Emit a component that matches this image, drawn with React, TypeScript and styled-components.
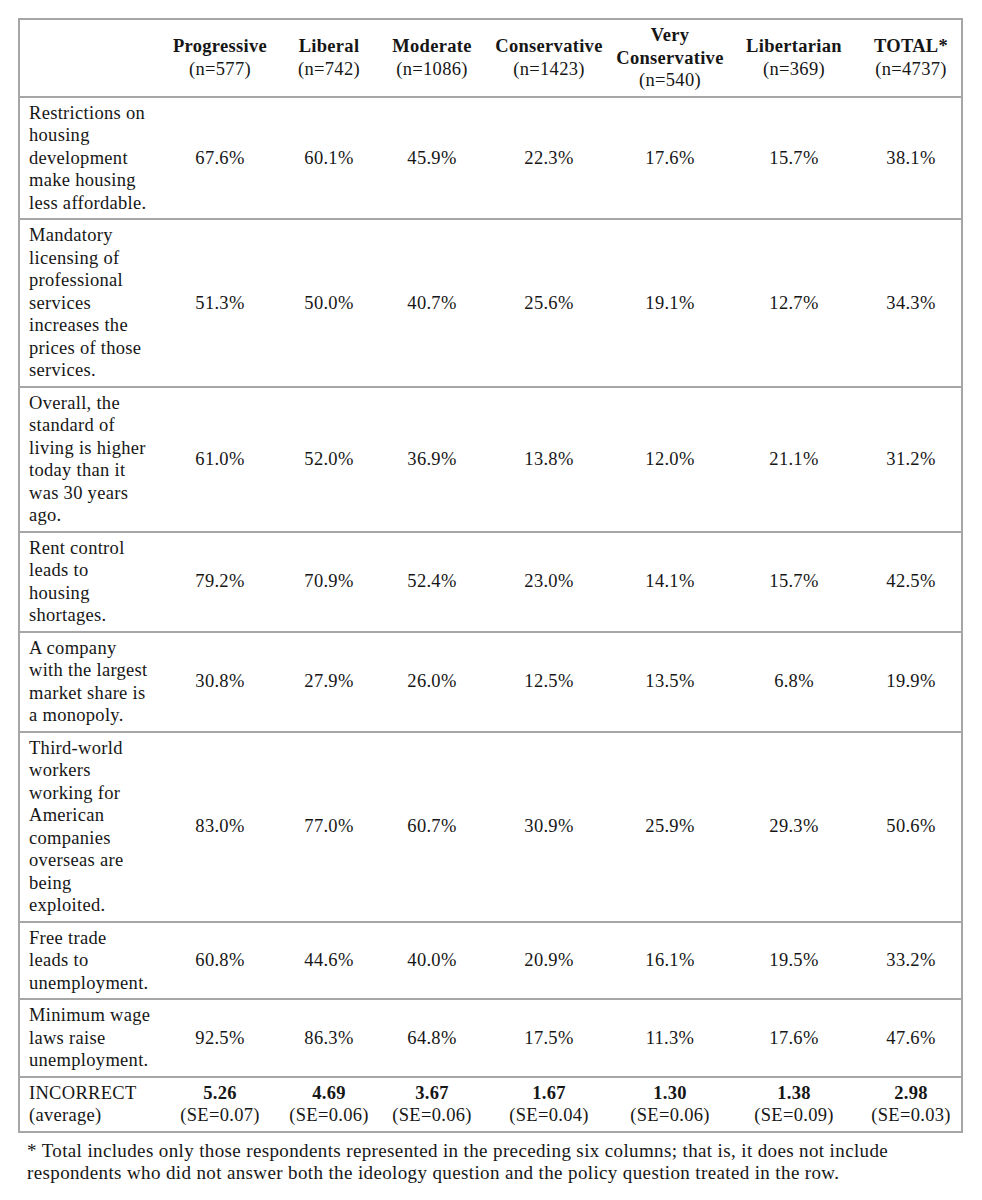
import styled, { createGlobalStyle } from "styled-components";

const GlobalStyle = createGlobalStyle`
  body {
    margin: 0;
    background: #ffffff;
    color: #161616;
    font-family: "Liberation Serif", "Times New Roman", serif;
  }
`;

const Page = styled.div`
  padding: 18px 0 0 18px;
  width: 943px;
`;

const Table = styled.table`
  width: 943px;
  table-layout: fixed;
  border-collapse: collapse;
  border: 2px solid #a6a6a6;
  font-size: 18.5px;
  line-height: 22.5px;
  letter-spacing: 0.3px;
`;

const Row = styled.tr`
  border-bottom: 2px solid #a6a6a6;
`;

const HeadCell = styled.th`
  padding: 4px 3px;
  text-align: center;
  vertical-align: middle;
  font-weight: 400;
`;

const ColName = styled.div`
  font-weight: 700;
`;

const LabelCell = styled.td`
  padding: 4px 4px 4px 9px;
  text-align: left;
  vertical-align: middle;
`;

const ValueCell = styled.td`
  padding: 4px 3px;
  text-align: center;
  vertical-align: middle;
`;

const Mean = styled.div`
  font-weight: 700;
`;

const Note = styled.p`
  margin: 7px 0 0 9px;
  font-size: 19px;
  line-height: 22.6px;
  letter-spacing: 0.37px;
  white-space: nowrap;
`;

interface Column {
  name: string[];
  n: number;
  width: number;
}

interface Statement {
  lines: string[];
  values: string[];
}

const columns: Column[] = [
  { name: ["Progressive"], n: 577, width: 118 },
  { name: ["Liberal"], n: 742, width: 100 },
  { name: ["Moderate"], n: 1086, width: 106 },
  { name: ["Conservative"], n: 1423, width: 128 },
  { name: ["Very", "Conservative"], n: 540, width: 114 },
  { name: ["Libertarian"], n: 369, width: 134 },
  { name: ["TOTAL*"], n: 4737, width: 101 },
];

const statements: Statement[] = [
  {
    lines: ["Restrictions on", "housing", "development", "make housing", "less affordable."],
    values: ["67.6%", "60.1%", "45.9%", "22.3%", "17.6%", "15.7%", "38.1%"],
  },
  {
    lines: ["Mandatory", "licensing of", "professional", "services", "increases the", "prices of those", "services."],
    values: ["51.3%", "50.0%", "40.7%", "25.6%", "19.1%", "12.7%", "34.3%"],
  },
  {
    lines: ["Overall, the", "standard of", "living is higher", "today than it", "was 30 years", "ago."],
    values: ["61.0%", "52.0%", "36.9%", "13.8%", "12.0%", "21.1%", "31.2%"],
  },
  {
    lines: ["Rent control", "leads to", "housing", "shortages."],
    values: ["79.2%", "70.9%", "52.4%", "23.0%", "14.1%", "15.7%", "42.5%"],
  },
  {
    lines: ["A company", "with the largest", "market share is", "a monopoly."],
    values: ["30.8%", "27.9%", "26.0%", "12.5%", "13.5%", "6.8%", "19.9%"],
  },
  {
    lines: ["Third-world", "workers", "working for", "American", "companies", "overseas are", "being", "exploited."],
    values: ["83.0%", "77.0%", "60.7%", "30.9%", "25.9%", "29.3%", "50.6%"],
  },
  {
    lines: ["Free trade", "leads to", "unemployment."],
    values: ["60.8%", "44.6%", "40.0%", "20.9%", "16.1%", "19.5%", "33.2%"],
  },
  {
    lines: ["Minimum wage", "laws raise", "unemployment."],
    values: ["92.5%", "86.3%", "64.8%", "17.5%", "11.3%", "17.6%", "47.6%"],
  },
];

const incorrect = [
  { mean: "5.26", se: "0.07" },
  { mean: "4.69", se: "0.06" },
  { mean: "3.67", se: "0.06" },
  { mean: "1.67", se: "0.04" },
  { mean: "1.30", se: "0.06" },
  { mean: "1.38", se: "0.09" },
  { mean: "2.98", se: "0.03" },
];

const lineBreaks = (lines: string[]) =>
  lines.map((line, i) => (
    <span key={i}>
      {line}
      {i < lines.length - 1 && <br />}
    </span>
  ));

export default function App() {
  return (
    <>
      <GlobalStyle />
      <Page>
        <Table>
          <colgroup>
            <col style={{ width: 142 }} />
            {columns.map((c) => (
              <col key={c.n} style={{ width: c.width }} />
            ))}
          </colgroup>
          <thead>
            <Row>
              <HeadCell />
              {columns.map((c) => (
                <HeadCell key={c.n}>
                  <ColName>{lineBreaks(c.name)}</ColName>
                  (n={c.n})
                </HeadCell>
              ))}
            </Row>
          </thead>
          <tbody>
            {statements.map((s, i) => (
              <Row key={i}>
                <LabelCell>{lineBreaks(s.lines)}</LabelCell>
                {s.values.map((v, j) => (
                  <ValueCell key={j}>{v}</ValueCell>
                ))}
              </Row>
            ))}
            <Row>
              <LabelCell>
                INCORRECT
                <br />
                (average)
              </LabelCell>
              {incorrect.map((x, j) => (
                <ValueCell key={j}>
                  <Mean>{x.mean}</Mean>
                  (SE={x.se})
                </ValueCell>
              ))}
            </Row>
          </tbody>
        </Table>
        <Note>
          * Total includes only those respondents represented in the preceding six columns; that is, it does not include
          <br />
          respondents who did not answer both the ideology question and the policy question treated in the row.
        </Note>
      </Page>
    </>
  );
}
